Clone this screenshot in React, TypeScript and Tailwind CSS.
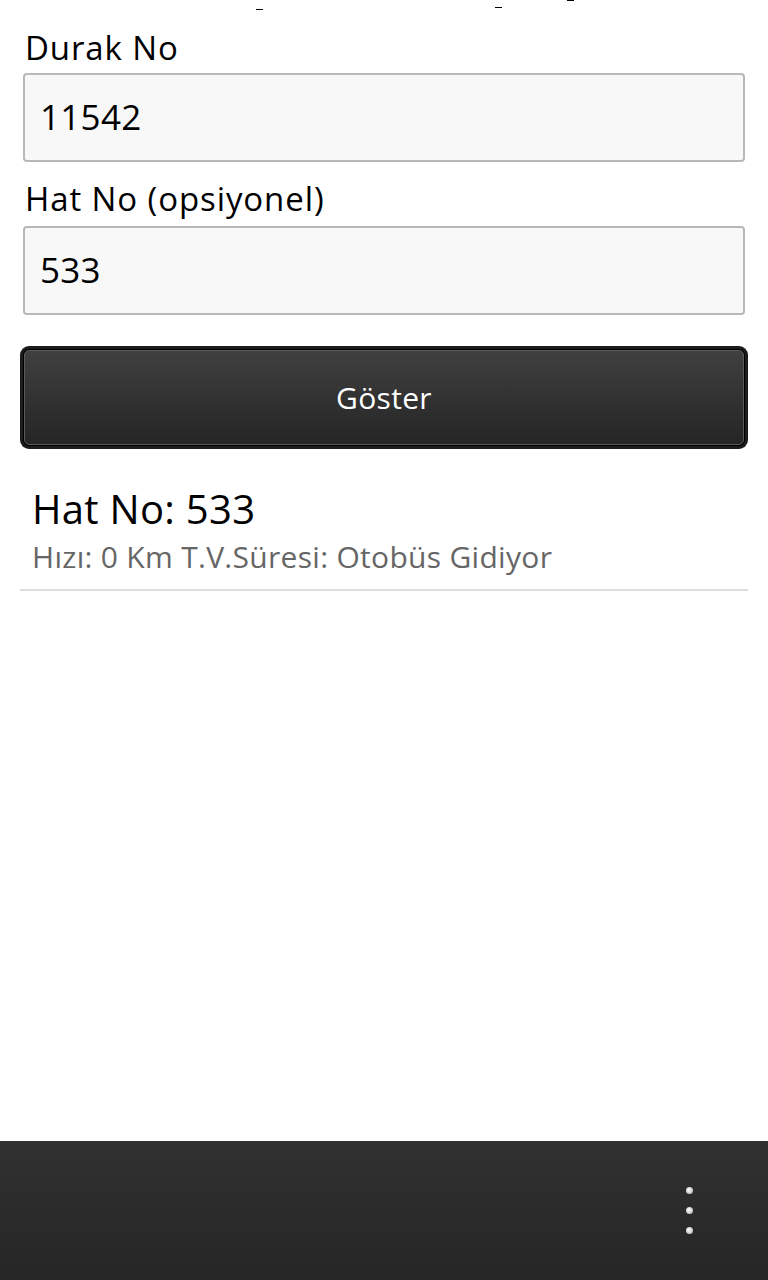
import React from "react";

// ----------------------------------------------------------------------

const FONT = { fontFamily: '"Open Sans", "Noto Sans", sans-serif' };

function Field({ label, value, labelClass }: { label: string; value: string; labelClass: string }) {
  return (
    <div className="flex flex-col">
      <div className={`pl-[5px] text-[33px] leading-none tracking-[0.9px] text-black ${labelClass}`}>
        {label}
      </div>
      <div className="mx-[3px] flex h-[89px] items-center rounded-[4px] border-2 border-[#b8b8b8] bg-[#f8f8f8] pl-[15px] text-[35px] tracking-[0.3px] text-black">
        {value}
      </div>
    </div>
  );
}

export default function App() {
  return (
    <div className="flex h-[1280px] w-[768px] flex-col bg-white" style={FONT}>
      {/* stray marks left at the top edge */}
      <div className="relative h-[28px]">
        <span className="absolute left-[256px] top-[9px] h-[1px] w-[7px] bg-black" />
        <span className="absolute left-[495px] top-[7px] h-[1px] w-[7px] bg-black" />
        <span className="absolute left-[567px] top-[0px] h-[1px] w-[7px] bg-black" />
      </div>

      <div className="flex flex-col px-5">
        <Field label="Durak No" value="11542" labelClass="pt-[3px] pb-[9px]" />
        <Field label="Hat No (opsiyonel)" value="533" labelClass="pt-[20px] pb-[11px]" />

        <div className="mt-[31px] rounded-[9px] bg-[#1c1c1c] p-[3px]">
          <div className="rounded-[6px] bg-black p-[1px]">
            <div className="flex h-[95px] items-center justify-center rounded-[5px] border border-[#5a5a5a] bg-gradient-to-b from-[#404040] to-[#252525] text-[30px] tracking-[0.3px] text-white">
              Göster
            </div>
          </div>
        </div>

        <div className="mt-[36px] border-b-2 border-[#dcdee0] px-3 pb-[12px]">
          <div className="text-[40px] leading-[48px] tracking-[0.3px] text-black">Hat No: 533</div>
          <div className="mt-[4px] text-[30px] leading-[40px] tracking-[0.3px] text-[#666666]">
            Hızı: 0 Km T.V.Süresi: Otobüs Gidiyor
          </div>
        </div>
      </div>

      <div className="flex-1" />

      <div className="relative h-[139px] bg-gradient-to-b from-[#313131] to-[#262626]">
        <div className="absolute left-[686px] top-[46px] flex flex-col gap-[13px]">
          {[0, 1, 2].map((i) => (
            <span
              key={i}
              className="block h-[7px] w-[7px] rounded-full bg-[radial-gradient(circle_at_40%_40%,#ffffff,#a8a8a8)]"
            />
          ))}
        </div>
      </div>
    </div>
  );
}
